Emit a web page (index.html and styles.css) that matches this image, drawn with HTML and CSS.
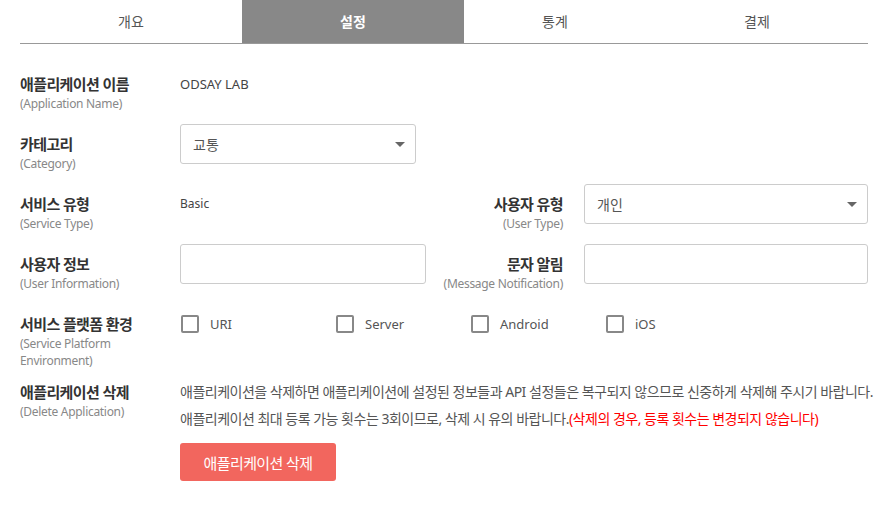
FILE: index.html
```html
<!DOCTYPE html>
<html lang="ko">
<head>
    <meta charset="UTF-8">
    <meta name="viewport" content="width=device-width, initial-scale=1.0">
    <title>애플리케이션 설정</title>
    <link rel="stylesheet" href="styles.css">
</head>
<body>
    <div class="page">
        <div class="tabs">
            <div class="tab">개요</div>
            <div class="tab active">설정</div>
            <div class="tab tab-narrow">통계</div>
            <div class="tab">결제</div>
        </div>

        <div class="form">
            <div class="row">
                <div class="label">
                    <div class="title">애플리케이션 이름</div>
                    <div class="sub">(Application Name)</div>
                </div>
                <div class="value">ODSAY LAB</div>
            </div>

            <div class="row">
                <div class="label">
                    <div class="title">카테고리</div>
                    <div class="sub">(Category)</div>
                </div>
                <div class="select field-left-sm">
                    <span>교통</span>
                    <span class="arrow"></span>
                </div>
            </div>

            <div class="row">
                <div class="label">
                    <div class="title">서비스 유형</div>
                    <div class="sub">(Service Type)</div>
                </div>
                <div class="value value-sm">Basic</div>
                <div class="label label-right">
                    <div class="title">사용자 유형</div>
                    <div class="sub">(User Type)</div>
                </div>
                <div class="select field-right">
                    <span>개인</span>
                    <span class="arrow"></span>
                </div>
            </div>

            <div class="row">
                <div class="label">
                    <div class="title">사용자 정보</div>
                    <div class="sub">(User Information)</div>
                </div>
                <div class="input field-left"></div>
                <div class="label label-right">
                    <div class="title">문자 알림</div>
                    <div class="sub">(Message Notification)</div>
                </div>
                <div class="input field-right"></div>
            </div>

            <div class="row row-platform">
                <div class="label">
                    <div class="title">서비스 플랫폼 환경</div>
                    <div class="sub">(Service Platform<br>Environment)</div>
                </div>
                <div class="checks">
                    <label class="check check-first"><span class="box"></span>URI</label>
                    <label class="check"><span class="box"></span>Server</label>
                    <label class="check"><span class="box"></span>Android</label>
                    <label class="check"><span class="box"></span>iOS</label>
                </div>
            </div>

            <div class="row">
                <div class="label">
                    <div class="title">애플리케이션 삭제</div>
                    <div class="sub">(Delete Application)</div>
                </div>
                <div class="delete">
                    <p>애플리케이션을 삭제하면 애플리케이션에 설정된 정보들과 API 설정들은 복구되지 않으므로 신중하게 삭제해 주시기 바랍니다.</p>
                    <p>애플리케이션 최대 등록 가능 횟수는 3회이므로, 삭제 시 유의 바랍니다.<span class="warn">(삭제의 경우, 등록 횟수는 변경되지 않습니다)</span></p>
                    <button class="btn-delete">애플리케이션 삭제</button>
                </div>
            </div>
        </div>
    </div>
</body>
</html>
```

FILE: styles.css
```css
body {
    margin: 0;
    font-family: 'Noto Sans', 'Noto Sans CJK KR', sans-serif;
    color: #555;
    background: #fff;
}
.page {
    padding: 0 20px;
    width: 848px;
}

/* tabs */
.tabs {
    display: flex;
    height: 43px;
    border-bottom: 1px solid #999;
}
.tab {
    width: 222px;
    line-height: 43px;
    text-align: center;
    font-size: 14px;
    color: #555;
}
.tab-narrow {
    width: 182px;
}
.tab.active {
    background-color: #888;
    color: #fff;
    font-weight: bold;
}

/* form */
.form {
    padding-top: 20px;
}
.row {
    display: grid;
    grid-template-columns: 160px 245px 159px 283px;
    align-items: start;
    margin-bottom: 12px;
}
.row-platform {
    margin-bottom: 3px;
}
.label {
    padding-top: 9px;
}
.label-right {
    text-align: right;
    padding-right: 21px;
}
.title {
    font-size: 15px;
    font-weight: bold;
    color: #333;
    line-height: 22px;
    letter-spacing: -0.6px;
}
.sub {
    font-size: 12px;
    color: #888;
    line-height: 17px;
    letter-spacing: -0.3px;
}
.value {
    padding-top: 9px;
    font-size: 13px;
    line-height: 22px;
    color: #444;
}
.value-sm {
    font-size: 12px;
}

.select, .input {
    height: 40px;
    border: 1px solid #ccc;
    border-radius: 3px;
    box-sizing: border-box;
}
.select {
    display: flex;
    align-items: center;
    justify-content: space-between;
    padding: 0 10px 0 12px;
    font-size: 14px;
    color: #555;
}
.field-left-sm {
    width: 236px;
}
.field-left {
    width: 246px;
}
.field-right {
    width: 284px;
}
.arrow {
    width: 0;
    height: 0;
    border-left: 5px solid transparent;
    border-right: 5px solid transparent;
    border-top: 5px solid #666;
}

/* checkboxes */
.checks {
    grid-column: 2 / 5;
    display: flex;
    padding-top: 11px;
}
.check {
    display: flex;
    align-items: center;
    width: 135px;
    font-size: 13px;
    color: #555;
    line-height: 18px;
}
.check-first {
    width: 155px;
}
.box {
    width: 18px;
    height: 18px;
    border: 2px solid #888;
    border-radius: 2px;
    box-sizing: border-box;
    margin-right: 11px;
    margin-left: 1px;
}

/* delete */
.delete {
    grid-column: 2 / 5;
    padding-top: 6px;
}
.delete p {
    margin: 0;
    font-size: 14px;
    line-height: 27px;
    letter-spacing: -0.5px;
    color: #555;
    white-space: nowrap;
}
.warn {
    color: #f00;
}
.btn-delete {
    margin-top: 11px;
    width: 156px;
    height: 38px;
    border: none;
    border-radius: 3px;
    background-color: #f2665e;
    color: #fff;
    font-family: 'Noto Sans', 'Noto Sans CJK KR', sans-serif;
    font-size: 15px;
    letter-spacing: -0.6px;
    cursor: pointer;
}
```
